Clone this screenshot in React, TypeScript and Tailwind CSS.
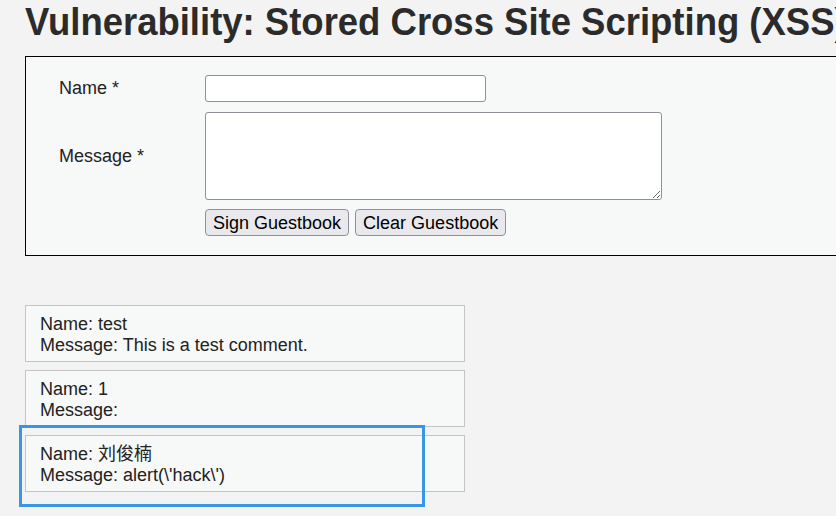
import React from 'react';

const comments = [
  { name: 'test', message: 'This is a test comment.' },
  { name: '1', message: '' },
  { name: '刘俊楠', message: "alert(\\'hack\\')" },
];

export default function App() {
  return (
    <div
      className="w-[836px] h-[516px] overflow-hidden bg-[#f3f3f3] text-[#222]"
      style={{ fontFamily: '"Liberation Sans", Arial, "Noto Sans CJK SC", sans-serif' }}
    >
      <div className="w-[1000px] pl-[25px]">
        <h1 className="text-[38px] leading-[44px] font-bold text-[#2b2b2b] whitespace-nowrap scale-x-[0.96] origin-left">
          Vulnerability: Stored Cross Site Scripting (XSS)
        </h1>

        {/* Guestbook form */}
        <div className="mt-[12px] w-[900px] h-[200px] border border-black bg-[#f7f8f8] pl-[33px] pt-[18px] text-[18px]">
          <div className="grid grid-cols-[146px_1fr] gap-y-[10px] items-center">
            <label>Name *</label>
            <input className="w-[281px] h-[27px] bg-white border border-[#8f8f9d] rounded-[3px]" />
            <label>Message *</label>
            <textarea className="w-[457px] h-[88px] bg-white border border-[#8f8f9d] rounded-[3px] block" />
          </div>
          <div className="ml-[146px] mt-[9px] flex gap-[6px]">
            <button className="h-[27px] px-[7px] bg-[#e9e9ed] border border-[#8f8f9d] rounded-[4px] text-[18px] leading-none text-black">
              Sign Guestbook
            </button>
            <button className="h-[27px] px-[7px] bg-[#e9e9ed] border border-[#8f8f9d] rounded-[4px] text-[18px] leading-none text-black">
              Clear Guestbook
            </button>
          </div>
        </div>

        {/* Comments */}
        <div className="relative mt-[49px] w-[440px] flex flex-col gap-[8px] text-[18px] leading-[21px]">
          {comments.map((c, i) => (
            <div key={i} className="border border-[#c4c4c4] bg-[#f7f8f8] pl-[14px] pt-[8px] pb-[5px]">
              <div>Name: {c.name}</div>
              <div>Message: {c.message}</div>
            </div>
          ))}
          <div className="absolute left-[-6px] top-[120px] w-[406px] h-[82px] border-[3px] border-[#3a96e5]" />
        </div>
      </div>
    </div>
  );
}
